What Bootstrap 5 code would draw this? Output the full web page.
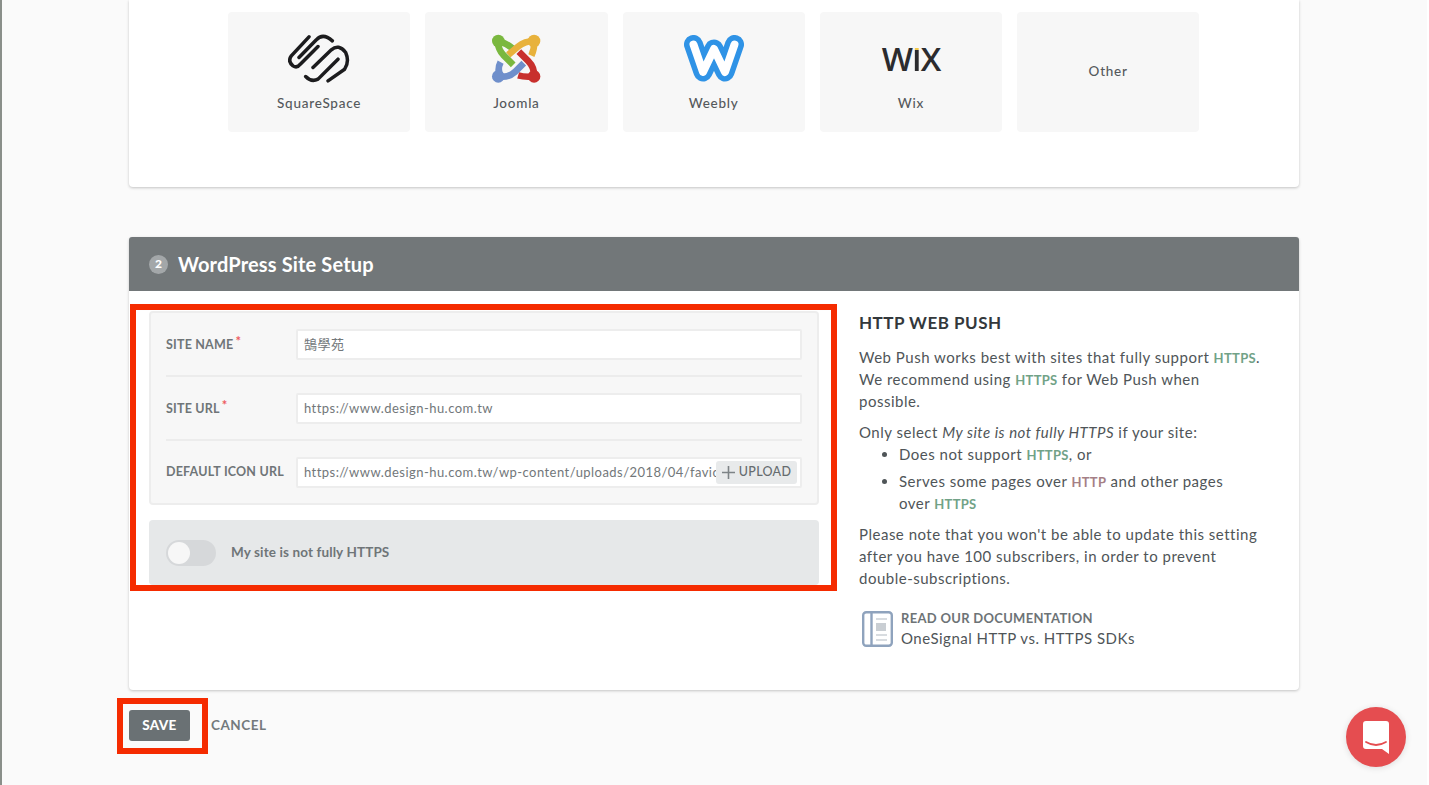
<!DOCTYPE html>
<html lang="en">
<head>
  <meta charset="UTF-8" />
  <title>WordPress Site Setup</title>
  <link href="https://cdn.jsdelivr.net/npm/bootstrap@5.3.2/dist/css/bootstrap.min.css" rel="stylesheet"/>
  <style>
    html, body {
      height: 785px;
      overflow: hidden;
    }
    body {
      background-color: #fafafa;
      color: #4f5558;
      font-family: "Lato", "Noto Sans CJK TC", sans-serif;
      font-size: 15px;
      border-left: 2px solid #8a8f8a;
      border-right: 2px solid #fff;
      position: relative;
    }
    .page-wrap {
      width: 1170px;
      margin-left: 127px;
    }
    .setup-panel {
      background-color: #fff;
      box-shadow: 0 1px 3px rgba(0, 0, 0, .22);
    }
    .platform-panel {
      height: 187px;
      padding: 12px 0 0 99px;
      margin-bottom: 50px;
      gap: 15px;
    }
    .platform-tile {
      width: 182.25px;
      height: 120px;
      background-color: #f7f7f7;
      border-radius: 4px;
      font-size: 13.5px;
      font-weight: 500;
      color: #55595c;
      letter-spacing: .75px;
    }
    .tile-plain {
      padding-bottom: 2px;
    }
    .logo-box {
      height: 54px;
      margin-top: 19px;
      margin-bottom: 8px;
    }
    .wix-text {
      font-family: "Open Sans", sans-serif;
      font-size: 33px;
      font-weight: 600;
      color: #2b2b2e;
      line-height: 54px;
      padding-top: 1px;
      letter-spacing: -1.2px;
    }
    .wix-i {
      background: linear-gradient(#f2c94c 32%, #2b2b2e 32%);
      -webkit-background-clip: text;
      background-clip: text;
      color: transparent;
    }
    .setup-head {
      height: 54px;
      background-color: #727779;
      color: #fff;
      border-radius: 3px 3px 0 0;
      padding-left: 20px;
      font-size: 20px;
      font-weight: 700;
      letter-spacing: .15px;
    }
    .step-dot {
      width: 19px;
      height: 19px;
      border-radius: 50%;
      background-color: #a3a7a9;
      font-size: 12px;
      font-weight: 900;
      margin-right: 10px;
    }
    .setup-body {
      height: 399px;
      padding: 20px 20px 0;
    }
    .form-col {
      width: 670px;
      margin-right: 40px;
      flex-shrink: 0;
    }
    .field-group {
      height: 194px;
      background-color: #f7f7f7;
      border: 2px solid #ededed;
      border-radius: 4px;
      padding: 16px 15px 0;
    }
    .field-row {
      height: 31px;
    }
    .field-rule {
      height: 2px;
      background-color: #ececec;
      margin: 15px 0 16px;
    }
    .field-label {
      width: 130px;
      flex-shrink: 0;
      font-size: 12.5px;
      font-weight: 700;
      color: #6f7578;
      white-space: nowrap;
      letter-spacing: .2px;
    }
    .req-star {
      color: #ee5a5f;
      font-size: 13px;
      position: relative;
      top: -3px;
      margin-left: 2px;
    }
    .field-box {
      width: 506px;
      height: 31px;
      background-color: #fff;
      border: 2px solid #ededed;
      border-radius: 2px;
      padding-left: 6px;
      font-size: 13px;
      color: #72777a;
      white-space: nowrap;
      overflow: hidden;
      letter-spacing: .45px;
    }
    .url-clip {
      width: 412px;
      flex-shrink: 0;
      overflow: hidden;
    }
    .upload-chip {
      height: 23px;
      width: 81px;
      flex-shrink: 0;
      background-color: #e8eaeb;
      border-radius: 3px;
      font-size: 12.5px;
      font-weight: 500;
      color: #666c6f;
      letter-spacing: .3px;
    }
    .toggle-panel {
      height: 65px;
      margin-top: 15px;
      background-color: #e6e8e9;
      border-radius: 4px;
      padding-left: 17px;
      font-size: 13.5px;
      font-weight: 700;
      color: #6f7578;
      letter-spacing: .12px;
    }
    .toggle-track {
      width: 50px;
      height: 26px;
      background-color: #d6d8da;
      border-radius: 13px;
      margin-right: 15px;
      padding: 2px;
    }
    .toggle-knob {
      width: 22px;
      height: 22px;
      border-radius: 50%;
      background-color: #f7f7f7;
    }
    .help-col {
      width: 405px;
      line-height: 22px;
      color: #4f5558;
      letter-spacing: .5px;
    }
    .help-title {
      font-size: 17px;
      font-weight: 700;
      color: #33383b;
      margin: 1px 0 12px;
      line-height: 22px;
      letter-spacing: .5px;
    }
    .help-col p {
      margin-bottom: 9px;
    }
    .help-col ul {
      margin-bottom: 9px;
      padding-left: 40px;
    }
    .help-col li {
      margin-bottom: 5px;
    }
    .tag-ok, .tag-warn {
      font-size: 13px;
      font-weight: 700;
      letter-spacing: .3px;
      line-height: 1;
    }
    .tag-ok {
      color: #71a287;
    }
    .tag-warn {
      color: #a57f86;
    }
    .doc-link {
      margin-top: 19px;
    }
    .doc-icon {
      margin-left: 3px;
    }
    .doc-label {
      font-size: 13px;
      font-weight: 700;
      color: #6d7376;
      line-height: 20px;
      letter-spacing: .3px;
    }
    .doc-name {
      line-height: 21px;
    }
    .action-row {
      margin-top: 20px;
    }
    .btn-save {
      width: 61px;
      height: 31px;
      padding: 0;
      background-color: #6a7174;
      border: 0;
      border-radius: 3px;
      color: #fff;
      font-size: 13.5px;
      font-weight: 900;
      letter-spacing: .3px;
    }
    .btn-save:hover {
      background-color: #5c6366;
      color: #fff;
    }
    .cancel-link {
      color: #747a7d;
      font-size: 13.5px;
      font-weight: 700;
      margin-left: 21px;
      text-decoration: none;
      letter-spacing: .5px;
    }
    .red-mark {
      position: absolute;
      border: 6px solid #f52b00;
    }
    .mark-form {
      left: 128px;
      top: 304px;
      width: 707px;
      height: 287px;
    }
    .mark-save {
      left: 115px;
      top: 698px;
      width: 91px;
      height: 56px;
    }
    .chat-bubble {
      position: absolute;
      left: 1344px;
      top: 707px;
      width: 60px;
      height: 60px;
      border-radius: 50%;
      background-color: #e54d50;
      box-shadow: 0 1px 6px rgba(0, 0, 0, .12);
    }
  </style>
</head>
<body>

<div class="page-wrap">

  <!-- Platform choice -->
  <div class="setup-panel platform-panel rounded-bottom-1 d-flex align-items-start">
    <div class="platform-tile text-center">
      <div class="logo-box d-flex align-items-center justify-content-center">
        <svg width="62" height="51" viewBox="205 97 186 152" fill="none" stroke="#1c1c1e" stroke-width="10.5" stroke-linecap="round">
          <path d="M268 108 L215 165 Q203 182 220 195 Q232 203 242 190 L295 137"/>
          <path d="M238 170 L290 117 Q310 95 338 120"/>
          <path d="M280 200 L335 147 Q357 128 378 155 Q390 182 375 205 L325 240"/>
          <path d="M258 227 Q275 245 295 235 L355 175"/>
        </svg>
      </div>
      SquareSpace
    </div>
    <div class="platform-tile text-center">
      <div class="logo-box d-flex align-items-center justify-content-center">
        <svg width="53" height="51" viewBox="810 94 160 154" fill="none" stroke-width="20" stroke-linecap="butt">
          <path d="M835 118 Q860 125 878 140" stroke="#7ab83f"/>
          <path d="M843 225 Q830 205 842 182" stroke="#6f8fcb"/>
          <path d="M943 118 Q945 140 935 162" stroke="#e8b23c"/>
          <path d="M943 225 Q915 228 895 222" stroke="#c8302d"/>
          <path d="M912 185 L885 212 Q865 230 835 225" stroke="#6f8fcb"/>
          <circle cx="835" cy="225" r="19" fill="#6f8fcb"/>
          <path d="M897 150 L925 178 Q945 198 943 225" stroke="#c8302d"/>
          <circle cx="943" cy="225" r="19" fill="#c8302d"/>
          <path d="M865 160 L895 135 Q915 118 943 118" stroke="#e8b23c"/>
          <circle cx="943" cy="118" r="19" fill="#e8b23c"/>
          <path d="M880 190 L850 160 Q832 140 835 118" stroke="#7ab83f"/>
          <circle cx="835" cy="118" r="19" fill="#7ab83f"/>
        </svg>
      </div>
      Joomla
    </div>
    <div class="platform-tile text-center">
      <div class="logo-box d-flex align-items-center justify-content-center">
        <svg width="60" height="47" viewBox="0 0 60 47" fill="none" stroke-linecap="round" stroke-linejoin="round">
          <path d="M9.5 9.5 L19 37 L30 14 L41 37 L50.5 9.5" stroke="#2f93e6" stroke-width="19"/>
          <path d="M9.5 9.5 L19 37 L30 14 L41 37 L50.5 9.5" stroke="#fff" stroke-width="8"/>
        </svg>
      </div>
      Weebly
    </div>
    <div class="platform-tile text-center">
      <div class="logo-box wix-text">W<span class="wix-i">I</span>X</div>
      Wix
    </div>
    <div class="platform-tile tile-plain d-flex align-items-center justify-content-center">Other</div>
  </div>

  <!-- Site setup -->
  <div class="setup-panel rounded-1">
    <div class="setup-head d-flex align-items-center">
      <span class="step-dot d-flex align-items-center justify-content-center">2</span>
      WordPress Site Setup
    </div>
    <div class="setup-body d-flex">
      <div class="form-col">
        <div class="field-group">
          <div class="field-row d-flex align-items-center">
            <div class="field-label">SITE NAME<span class="req-star">*</span></div>
            <div class="field-box d-flex align-items-center">鵠學苑</div>
          </div>
          <div class="field-rule"></div>
          <div class="field-row d-flex align-items-center">
            <div class="field-label">SITE URL<span class="req-star">*</span></div>
            <div class="field-box d-flex align-items-center">https://www.design-hu.com.tw</div>
          </div>
          <div class="field-rule"></div>
          <div class="field-row d-flex align-items-center">
            <div class="field-label">DEFAULT ICON URL</div>
            <div class="field-box d-flex align-items-center">
              <span class="url-clip">https://www.design-hu.com.tw/wp-content/uploads/2018/04/favicon.png</span>
              <span class="upload-chip d-flex align-items-center justify-content-center gap-1">
                <svg width="13" height="13" viewBox="0 0 13 13" stroke="#7d8386" stroke-width="1.6"><path d="M6.5 0V13M0 6.5H13"/></svg>
                UPLOAD
              </span>
            </div>
          </div>
        </div>
        <div class="toggle-panel d-flex align-items-center">
          <div class="toggle-track"><div class="toggle-knob"></div></div>
          My site is not fully HTTPS
        </div>
      </div>

      <div class="help-col">
        <div class="help-title">HTTP WEB PUSH</div>
        <p>Web Push works best with sites that fully support <span class="tag-ok">HTTPS</span>.<br>We recommend using <span class="tag-ok">HTTPS</span> for Web Push when<br>possible.</p>
        <p class="mb-0">Only select <em>My site is not fully HTTPS</em> if your site:</p>
        <ul>
          <li>Does not support <span class="tag-ok">HTTPS</span>, or</li>
          <li>Serves some pages over <span class="tag-warn">HTTP</span> and other pages<br>over <span class="tag-ok">HTTPS</span></li>
        </ul>
        <p>Please note that you won't be able to update this setting<br>after you have 100 subscribers, in order to prevent<br>double-subscriptions.</p>
        <div class="doc-link d-flex align-items-center gap-2">
          <svg width="31" height="36" viewBox="0 0 31 36" fill="none" class="doc-icon">
            <rect x="1.2" y="1.2" width="28.6" height="33.6" rx="3" stroke="#8fa3bd" stroke-width="2.4"/>
            <path d="M9.5 1V35" stroke="#8fa3bd" stroke-width="2.4"/>
            <path d="M14 8H25M14 29H25M14 24H25" stroke="#ccd1d6" stroke-width="1.5"/>
            <rect x="14" y="12" width="10" height="8" fill="#c9ced3"/>
          </svg>
          <div>
            <div class="doc-label">READ OUR DOCUMENTATION</div>
            <div class="doc-name">OneSignal HTTP vs. HTTPS SDKs</div>
          </div>
        </div>
      </div>
    </div>
  </div>

  <div class="action-row d-flex align-items-center">
    <button type="button" class="btn btn-save">SAVE</button>
    <a class="cancel-link" href="#">CANCEL</a>
  </div>
</div>

<!-- Annotations drawn over the page -->
<div class="red-mark mark-form"></div>
<div class="red-mark mark-save"></div>

<div class="chat-bubble d-flex align-items-center justify-content-center">
  <svg width="26" height="33" viewBox="0 0 26 33">
    <path d="M3 0H23Q26 0 26 3V33L19 28H3Q0 28 0 25V3Q0 0 3 0Z" fill="#fff"/>
    <path d="M3 21Q13 27 23 21" fill="none" stroke="#e54d50" stroke-width="1.8" stroke-linecap="round"/>
  </svg>
</div>

<script src="https://cdn.jsdelivr.net/npm/bootstrap@5.3.2/dist/js/bootstrap.bundle.min.js"></script>
</body>
</html>
